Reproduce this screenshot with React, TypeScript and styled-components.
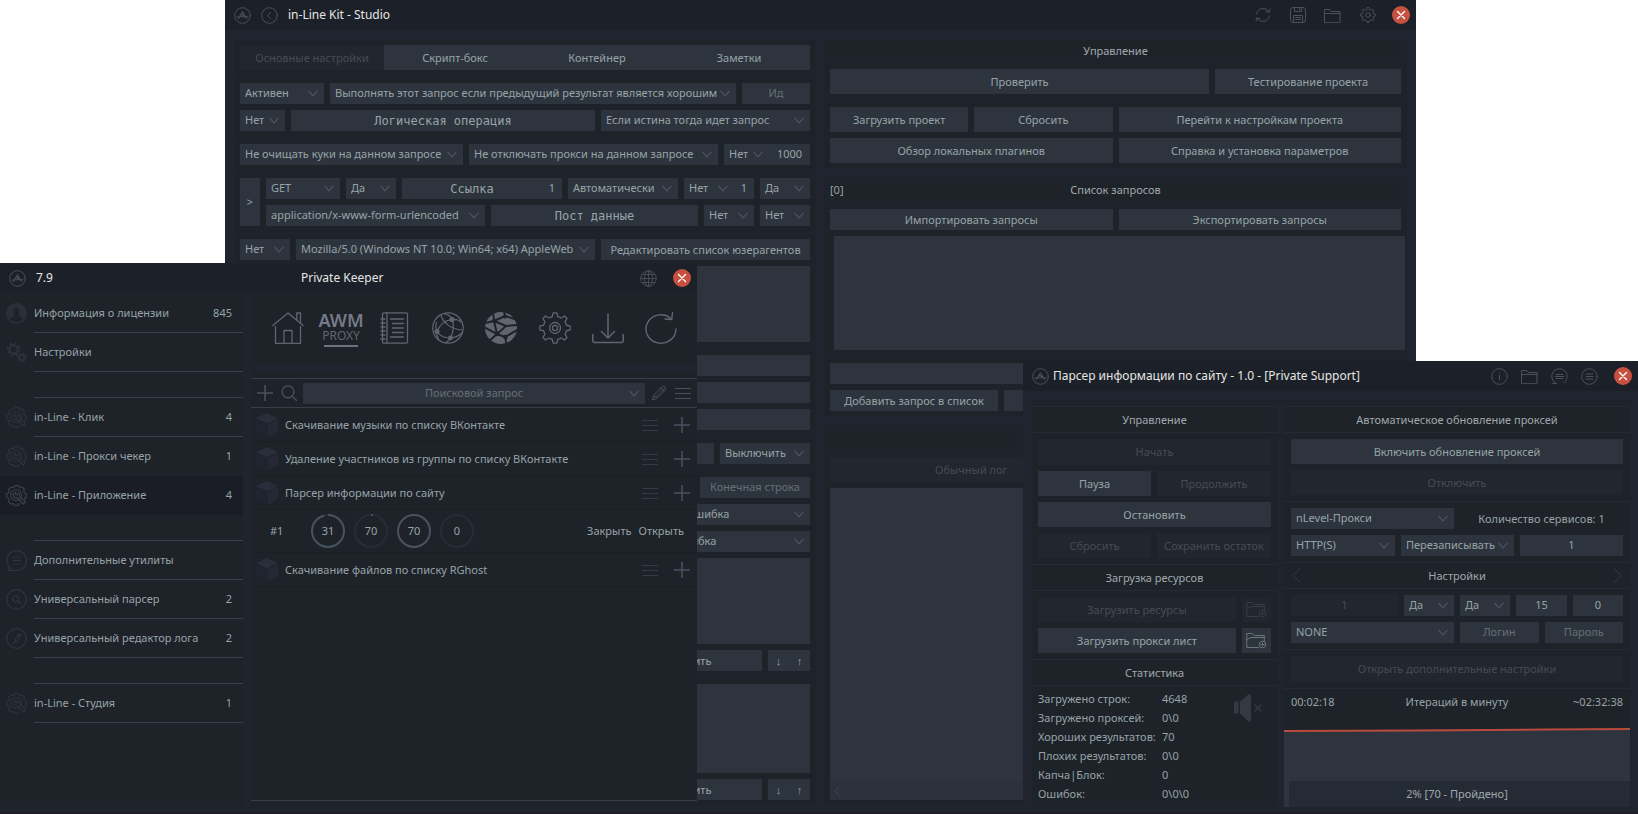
import React from "react";
import styled, { createGlobalStyle, css } from "styled-components";

const c = {
  title: "#1c2028",
  body: "#20242e",
  panel: "#1e2229",
  control: "#2e343d",
  disabled: "#22262f",
  text: "#96a4a8",
  heading: "#a0a9ac",
  dim: "#667075",
  off: "#444d53",
  line: "#3a3e47",
  soft: "#262a34",
  icon: "#4b505b",
  faint: "#2c313c",
  close: "#c75141",
};

const Global = createGlobalStyle`
  * { box-sizing: border-box; }
  body { margin: 0; background: #ffffff; }
  body, button, input, select, textarea {
    font-family: "Noto Sans", "Open Sans", sans-serif;
    font-size: 11px;
    line-height: 16px;
  }
`;

/* ---------- shared parts ---------- */

const Desktop = styled.main`
  position: relative;
  min-height: 100vh;
  overflow: hidden;
  color: ${c.text};
`;

const Window = styled.section`
  position: absolute;
  bottom: 0;
  display: flex;
  flex-direction: column;
  overflow: hidden;
  background: ${c.body};
  border-bottom: 2px solid #1d1c27;
`;

const StudioWindow = styled(Window)`
  top: 0;
  left: 225px;
  right: 222px;
`;

const KeeperWindow = styled(Window)`
  top: 263px;
  left: 0;
  width: 697px;
`;

const ParserWindow = styled(Window)`
  top: 361px;
  right: 0;
  width: 615px;
`;

const TitleBar = styled.header<{ $gap?: number }>`
  display: flex;
  align-items: center;
  flex: none;
  height: 30px;
  padding: 0 6px 0 9px;
  gap: ${(p) => p.$gap ?? 10}px;
  background: ${c.title};
  color: ${c.icon};
`;

const Title = styled.h1`
  margin: 0;
  font-size: 12px;
  line-height: 18px;
  font-weight: 400;
  color: #e6e6e6;
  white-space: nowrap;
`;

const Tools = styled.div`
  display: flex;
  align-items: center;
  gap: 16px;
  margin-left: auto;
`;

const ToolIcons = styled.div<{ $gap?: number }>`
  display: grid;
  grid-auto-flow: column;
  grid-auto-columns: 17px;
  gap: ${(p) => p.$gap ?? 0}px;
`;

const IconButton = styled.button<{ $tone?: string }>`
  display: grid;
  place-items: center;
  padding: 0;
  border: 0;
  background: none;
  color: ${(p) => p.$tone ?? c.icon};
  flex: none;
`;

const CloseButton = styled.button`
  display: grid;
  place-items: center;
  width: 18px;
  height: 18px;
  padding: 0;
  border: 0;
  border-radius: 50%;
  background: ${c.close};
  color: #ffffff;
`;

const Row = styled.div<{ $cols?: string; $gap?: number }>`
  display: grid;
  grid-template-columns: ${(p) => p.$cols ?? "1fr"};
  gap: ${(p) => p.$gap ?? 6}px;
`;

const Button = styled.button<{ $h?: number }>`
  min-width: 0;
  height: ${(p) => p.$h ?? 25}px;
  padding: 0;
  border: 0;
  background: ${c.control};
  color: ${c.text};
  white-space: nowrap;
  &:disabled {
    background: ${c.disabled};
    color: ${c.off};
  }
`;

const TallButton = styled(Button)`
  height: 100%;
`;

const Input = styled.input<{ $mono?: boolean }>`
  width: 100%;
  min-width: 0;
  height: 21px;
  padding: 0 0 2px;
  border: 0;
  border-radius: 0;
  background: ${c.control};
  color: ${c.text};
  text-align: center;
  ${(p) => p.$mono && css`
    font-family: "DejaVu Sans Mono", monospace;
    font-size: 12px;
    padding-bottom: 0;
  `}
  &::placeholder {
    color: ${(p) => (p.$mono ? c.text : c.dim)};
    opacity: 1;
  }
  &:disabled {
    background: ${c.disabled};
    color: ${c.off};
  }
`;

const TextArea = styled.textarea<{ $h?: number }>`
  display: block;
  width: 100%;
  height: ${(p) => (p.$h ? `${p.$h}px` : "auto")};
  flex: ${(p) => (p.$h ? "none" : "1")};
  min-height: 0;
  padding: 0;
  border: 0;
  resize: none;
  background: ${c.control};
  color: ${c.text};
`;

const SelectBox = styled.div`
  position: relative;
  min-width: 0;
  height: 21px;
  color: #4d545e;
`;

const SelectField = styled.select`
  appearance: none;
  display: block;
  width: 100%;
  height: 21px;
  padding: 0 0 2px 5px;
  border: 0;
  border-radius: 0;
  background: ${c.control};
  color: ${c.text};
`;

const Arrow = styled.svg`
  position: absolute;
  right: 6px;
  top: 7px;
  pointer-events: none;
`;

const Chevron = () => (
  <Arrow width="10" height="7" viewBox="0 0 10 7" fill="none" stroke="currentColor" strokeWidth="1.2">
    <path d="M.5.8 5 5.800 9.500.8" />
  </Arrow>
);

const Select = ({ value, label }: { value: string; label: string }) => (
  <SelectBox>
    <SelectField aria-label={label} defaultValue={value}>
      <option>{value}</option>
    </SelectField>
    <Chevron />
  </SelectBox>
);

/* ---------- icons ---------- */

const line = { fill: "none", stroke: "currentColor", strokeLinecap: "round", strokeLinejoin: "round" } as const;

function gearPath(cx: number, cy: number, teeth: number, outer: number, inner: number) {
  const step = (Math.PI * 2) / teeth;
  const pts: string[] = [];
  for (let i = 0; i < teeth; i++) {
    const a = i * step - Math.PI / 2;
    for (const [k, r] of [[-0.3, inner], [-0.15, outer], [0.15, outer], [0.3, inner]]) {
      pts.push(`${(cx + r * Math.cos(a + k * step)).toFixed(2)} ${(cy + r * Math.sin(a + k * step)).toFixed(2)}`);
    }
  }
  return `M${pts.join("L")}Z`;
}

const Logo = () => (
  <svg width="17" height="17" viewBox="0 0 17 17" {...line} color={c.icon}>
    <circle cx="8.500" cy="8.500" r="7.800" />
    <path d="M3 10h2.500l3-5.200L10 7.500M4.500 11.500l1-1.500M7 9.800h7M10 7.500l2.500 4M6 8l2-.5 2.500 1.500" strokeWidth="1.100" />
  </svg>
);

const BackIcon = () => (
  <svg width="17" height="17" viewBox="0 0 17 17" {...line}>
    <circle cx="8.500" cy="8.500" r="7.800" />
    <path d="M9.500 5.500 6.500 8.500l3 3" />
  </svg>
);

const CrossIcon = () => (
  <svg width="10" height="10" viewBox="0 0 10 10" {...line} strokeWidth="1.400">
    <path d="m1.500 1.500 7 7M8.500 1.500l-7 7" />
  </svg>
);

const SyncIcon = () => (
  <svg width="16" height="16" viewBox="0 0 16 16" {...line}>
    <path d="M1.500 7A6.800 6.800 0 0 1 14 4.800M14.500 9A6.800 6.800 0 0 1 2 11.200M15 1.800l-.8 3.400-3.200-.8M1 14.200l.8-3.400 3.200.8" />
  </svg>
);

const SaveIcon = () => (
  <svg width="16" height="16" viewBox="0 0 16 16" {...line}>
    <rect x=".5" y=".5" width="15" height="15" rx="2.500" />
    <path d="M4.500.5v4h7v-4M9.500 1.500v1.500M3.500 15V8.500h9V15M5.500 10.500h5M5.500 12.500h5" />
  </svg>
);

const FolderIcon = () => (
  <svg width="17" height="15" viewBox="0 0 17 15" {...line}>
    <path d="M.5 14.300V1.500h5l1.500 2h9v10.800zM.5 5.500h15.500" />
  </svg>
);

const CogIcon = () => (
  <svg width="16" height="16" viewBox="0 0 16 16" {...line}>
    <path d={gearPath(8, 8, 8, 7.5, 5.7)} />
    <circle cx="8" cy="8" r="2.300" />
  </svg>
);

const GlobeIcon = () => (
  <svg width="17" height="17" viewBox="0 0 17 17" {...line} strokeWidth=".9">
    <circle cx="8.500" cy="8.500" r="7.800" />
    <ellipse cx="8.500" cy="8.500" rx="4" ry="7.800" />
    <path d="M8.500.7v15.600M.7 8.500h15.600M2 4.500h13M2 12.500h13" />
  </svg>
);

const InfoIcon = () => (
  <svg width="17" height="17" viewBox="0 0 17 17" {...line}>
    <circle cx="8.500" cy="8.500" r="7.800" />
    <path d="M8.500 7.500v4M8.500 5v.3" strokeWidth="1.200" />
  </svg>
);

const ChatIcon = () => (
  <svg width="17" height="17" viewBox="0 0 17 17" {...line}>
    <path d="M5.500 15.700a7.800 7.800 0 1 1 7.300-.7M1.500 15.500h4" />
    <path d="M5 6.500h7M4 8.500h9M5 10.500h7" />
  </svg>
);

const CircleMenuIcon = () => (
  <svg width="17" height="17" viewBox="0 0 17 17" {...line}>
    <circle cx="8.500" cy="8.500" r="7.800" />
    <path d="M5 6h7M5 8.500h7M5 11h7" />
  </svg>
);

const big = { width: 32, height: 32, viewBox: "0 0 32 32", ...line, strokeWidth: 1.3 };

const HomeIcon = () => (
  <svg {...big}>
    <path d="M.8 13.500 16 1l15.200 12.500M24.800 7.500V1h3.700v9.500M3.500 14.500v16.800H12V18.500h8v12.800h8.500V14.500M12 31.300h8" />
  </svg>
);

const NotebookIcon = () => (
  <svg {...big}>
    <rect x="4.500" y=".8" width="25" height="30.400" rx="1.500" />
    <path d="M9 1v30M12.500 7h13M14.500 11.500h11M14.500 16h11M14.500 20.500h11M12.500 25h13" />
    <path d="M3 7h4M3 11h4M3 15h4M3 19h4M3 23h4M3 27h4" />
  </svg>
);

const NetworkIcon = () => (
  <svg {...big} strokeWidth="1.200">
    <circle cx="16" cy="16" r="15.200" />
    <path d="M5 19.500C8 12 13 8.500 20 7.500M20 7.500c-1-3-4-5-8-5.800M20 7.500c4-.5 7 .5 8.500 2.500M20 7.500c2.500 6 1.500 12-1.500 18.500M5 19.500c3 4.500 8 6.500 13.500 6.500M18.500 26c5-.5 9-2.500 11.500-5M5 19.500c-1.500-3-1.500-6-.5-9M5 19.500c-.5 3 0 5 1.500 7M18.500 26c-1 2-2.500 3.500-5 4.800M9 3c2 8 10 14 21 15" />
    <g fill="currentColor"><circle cx="5" cy="19.500" r="2" /><circle cx="20" cy="7.500" r="2" /><circle cx="18.500" cy="26" r="1.800" /></g>
  </svg>
);

const BallIcon = () => (
  <svg {...big} stroke="none">
    <circle cx="16" cy="16" r="16" fill="currentColor" />
    <g fill="none" stroke={c.panel} strokeWidth="2">
      <path d="M0 11 9 9 20 4 19-1M9 9 8-1M9 9l3 13-9 8M12 22-1 15M12 22l9-8 12-1M20 4l13 4M21 14 9 9M12 22l8 3 2 9M20 25l12-7" />
    </g>
    <g fill={c.panel}><circle cx="9" cy="9" r="2" /><circle cx="12" cy="22" r="2.300" /><circle cx="20" cy="4.500" r="2" /><circle cx="20.500" cy="25" r="2.300" /></g>
  </svg>
);

const BigGearIcon = () => (
  <svg {...big}>
    <path d={gearPath(16, 16, 8, 15.3, 11.8)} />
    <circle cx="16" cy="16" r="5.500" />
    <circle cx="16" cy="16" r="2.600" />
  </svg>
);

const DownloadIcon = () => (
  <svg {...big} strokeWidth="1.500">
    <path d="M16 2v24M9.500 19.500 16 26l6.500-6.500M.8 22.500v6a2 2 0 0 0 2 2h26.400a2 2 0 0 0 2-2v-6" />
  </svg>
);

const ReloadIcon = () => (
  <svg {...big} strokeWidth="1.400">
    <path d="M31 17A15 14.200 0 1 1 25.500 6M27.500.8 26.800 7.500 20 7" />
  </svg>
);

const PlusIcon = () => (
  <svg width="16" height="16" viewBox="0 0 16 16" fill="none" stroke="currentColor" strokeWidth="1.600">
    <path d="M8 0v16M0 8h16" />
  </svg>
);

const MenuIcon = () => (
  <svg width="16" height="16" viewBox="0 0 16 16" fill="none" stroke="currentColor">
    <path d="M0 3.500h16M0 8.500h16M0 13.500h16" />
  </svg>
);

const SearchIcon = () => (
  <svg width="16" height="16" viewBox="0 0 16 16" {...line} strokeWidth="1.400">
    <circle cx="7" cy="6.800" r="5.900" />
    <path d="m11.500 11.500 4 4" />
  </svg>
);

const PencilIcon = () => (
  <svg width="16" height="16" viewBox="0 0 16 16" {...line}>
    <path d="M1.500 14.500 2.800 10 11 1.800q1.500-1.200 3 .2t.2 3L6 13.200zM3 10.500l2.500 2.500M4.500 12 12 4.500M10 3l3 3" />
  </svg>
);

const CubeIcon = () => (
  <svg width="22" height="24" viewBox="0 0 22 24">
    <path d="M11 0 22 5 11 10.500 0 5z" fill="#292e3b" />
    <path d="M0 6 10.500 11.500V24L0 18z" fill="#20242e" />
    <path d="M11.500 11.500 22 6v12l-10.500 6z" fill="#242935" />
  </svg>
);

const UserIcon = () => (
  <svg width="21" height="21" viewBox="0 0 21 21">
    <circle cx="10.500" cy="10.500" r="10.500" fill="#2a303a" />
    <path d="M10.500 4.500a3.500 3.800 0 0 1 2 6.500v1.500c0 1 3.500 1.300 4.500 3.500q-2.500 3-6.500 3T4 16c1-2.200 4.500-2.500 4.500-3.500V11a3.500 3.800 0 0 1 2-6.500" fill="#1e2229" />
  </svg>
);

const GearsIcon = () => (
  <svg width="21" height="21" viewBox="0 0 21 21" fill="none" stroke="#2c323b">
    <g strokeWidth="2.400"><circle cx="7.500" cy="7.500" r="4.200" /><circle cx="15.800" cy="15.500" r="2.700" strokeWidth="2" /></g>
    <circle cx="7.500" cy="7.500" r="6.200" strokeWidth="2" strokeDasharray="2.400 2.470" />
    <circle cx="15.800" cy="15.500" r="4.200" strokeWidth="1.800" strokeDasharray="1.700 1.600" />
  </svg>
);

const WrenchGearIcon = ({ bright }: { bright?: boolean }) => (
  <svg width="21" height="21" viewBox="0 0 21 21" {...line} strokeWidth="1.200" color={bright ? "#3a414c" : "#2d333d"}>
    <path d="M19 14.500 18.700 13.200 20.300 12.300V8.700L18.500 8l-.9-2 .8-1.700L16 2l-2 .8L12.800.7H8.700L7.800 2.800 5.500 2 2.500 4.300 3.200 6 2.500 8 .7 8.700v3.600L2.500 13l.8 2-.8 1.700L5 19.200l2-.8 1.500 1.900h3.800l.7-1.800" />
    <circle cx="10" cy="10" r="5.500" />
    <path d="M10 7a3 3 0 0 0-2.800 3.500 3 3 0 0 0 4 2L17 19l2.500-2.200-6-6A3 3 0 0 0 12.500 8L11 10l-1.500-.5z" />
  </svg>
);

const UtilIcon = ({ kind }: { kind: "chat" | "search" | "edit" }) => (
  <svg width="21" height="21" viewBox="0 0 21 21" {...line} strokeWidth="1.200" color="#2f353f">
    {kind === "chat" ? <path d="M5.500 18.800A9.800 9.800 0 1 1 10.500 20.300H2l1.700-3" /> : <circle cx="10.500" cy="10.500" r="9.800" />}
    {kind === "chat" && <path d="M7 7h7.500M7 10.500h7.500M7 14h7.500" />}
    {kind === "search" && <path d="M12.800 9.800a3 3 0 1 1-6 0 3 3 0 0 1 6 0M12.200 12l2.500 2.500" />}
    {kind === "edit" && <path d="m9 14.500.5-3L13 6l2.200 1.200-3.500 5.500zM6 15.500l3-1M12.500 6.800l2 1.300" />}
  </svg>
);

const FolderAddIcon = () => (
  <svg width="21" height="17" viewBox="0 0 21 17" {...line}>
    <path d="M12.500 15.500H.8V1.500h5.500l2 2h10v6M.8 7.500 5 5.500h13.300" />
    <circle cx="16.500" cy="12.500" r="3.300" />
    <path d="M15 12.500h3M16.500 11v3" />
  </svg>
);

const MuteIcon = () => (
  <svg width="28" height="28" viewBox="0 0 28 28" color="#333a43">
    <path d="M0 8.500q0-1 1-1h3.500v12H1q-1 0-1-1zM6 7.500 14.500.3Q17 0 17 1.500v25q0 1.500-2.500 1L6 19.500z" fill="currentColor" />
    <path d="m20.500 10.500 7 7M27.500 10.500l-7 7" stroke="currentColor" strokeWidth="1.400" />
  </svg>
);

/* ---------- studio ---------- */

const StudioBody = styled.div`
  display: grid;
  grid-template-columns: minmax(0, 582fr) minmax(0, 583fr);
  gap: 8px;
  flex: 1;
  min-height: 0;
  padding: 9px 9px 6px;
`;

const Column = styled.div`
  display: flex;
  flex-direction: column;
  gap: 8px;
  min-width: 0;
`;

const Panel = styled.div<{ $fill?: boolean }>`
  display: flex;
  flex-direction: column;
  gap: 1px;
  flex: ${(p) => (p.$fill ? "1" : "none")};
`;

const Group = styled.div<{ $fill?: boolean }>`
  display: flex;
  flex-direction: column;
  gap: 6px;
  flex: ${(p) => (p.$fill ? "1" : "none")};
  padding: 6px;
  background: ${c.panel};
`;

const PanelHead = styled.div<{ $h?: number }>`
  display: grid;
  grid-template-columns: 1fr auto 1fr;
  align-items: center;
  height: ${(p) => p.$h ?? 25}px;
  padding: 0 6px;
  background: ${c.panel};
`;

const HeadText = styled.h2`
  grid-column: 2;
  margin: 0;
  font-size: 11px;
  line-height: 16px;
  font-weight: 400;
  color: ${c.heading};
`;

const Tabs = styled.div`
  display: grid;
  grid-template-columns: 144px 1fr 1fr 1fr;
`;

const RequestGrid = styled.div`
  display: grid;
  grid-template-columns: 20px 1fr;
  gap: 6px;
`;

const Lines = styled.div`
  display: flex;
  flex-direction: column;
  gap: 6px;
  min-width: 0;
`;

const EndRow = styled.div<{ $cols: string }>`
  display: grid;
  grid-template-columns: ${(p) => p.$cols};
  column-gap: 6px;
  justify-content: end;
`;

const QueryList = styled.div`
  display: flex;
  margin: 0 -4px 0 4px;
`;

const LogBox = styled.div`
  display: flex;
  align-items: flex-end;
  flex: 1;
  background: ${c.control};
`;

const LogScroll = styled.div`
  display: flex;
  align-items: center;
  flex: 1;
  height: 18px;
  padding-left: 4px;
  background: #2c323b;
  color: #3e4752;
`;

const Studio = () => (
  <StudioWindow aria-label="Studio">
    <TitleBar>
      <Logo />
      <IconButton aria-label="Назад"><BackIcon /></IconButton>
      <Title>in-Line Kit - Studio</Title>
      <Tools>
        <ToolIcons $gap={18}>
          <IconButton aria-label="Обновить"><SyncIcon /></IconButton>
          <IconButton aria-label="Сохранить"><SaveIcon /></IconButton>
          <IconButton aria-label="Открыть"><FolderIcon /></IconButton>
          <IconButton aria-label="Параметры"><CogIcon /></IconButton>
        </ToolIcons>
        <CloseButton aria-label="Закрыть"><CrossIcon /></CloseButton>
      </Tools>
    </TitleBar>
    <StudioBody>
      <Panel $fill>
        <Group>
          <Tabs>
            <Button disabled>Основные настройки</Button>
            <Button>Скрипт-бокс</Button>
            <Button>Контейнер</Button>
            <Button>Заметки</Button>
          </Tabs>
        </Group>
        <Group>
          <Row $cols="84px 1fr 68px">
            <Select label="Состояние" value="Активен" />
            <Select label="Условие" value="Выполнять этот запрос если предыдущий результат является хорошим" />
            <Input aria-label="Ид" placeholder="Ид" />
          </Row>
          <Row $cols="45px 1fr 209px">
            <Select label="Отрицание" value="Нет" />
            <Input $mono aria-label="Логическая операция" placeholder="Логическая операция" />
            <Select label="Переход" value="Если истина тогда идет запрос" />
          </Row>
        </Group>
        <Group>
          <Row $cols="223px 1fr 86px">
            <Select label="Куки" value="Не очищать куки на данном запросе" />
            <Select label="Прокси" value="Не отключать прокси на данном запросе" />
            <Row $cols="45px 1fr" $gap={0}>
              <Select label="Пауза" value="Нет" />
              <Input aria-label="Длительность" defaultValue="1000" />
            </Row>
          </Row>
        </Group>
        <Group>
          <RequestGrid>
            <TallButton>&gt;</TallButton>
            <Lines>
              <Row $cols="74px 50px 1fr 110px 70px 50px">
                <Select label="Метод" value="GET" />
                <Select label="Редирект" value="Да" />
                <Row $cols="1fr 20px" $gap={0}>
                  <Input $mono aria-label="Ссылка" placeholder="Ссылка" />
                  <Input aria-label="Номер ссылки" defaultValue="1" />
                </Row>
                <Select label="Кодировка" value="Автоматически" />
                <Row $cols="50px 1fr" $gap={0}>
                  <Select label="Повтор" value="Нет" />
                  <Input aria-label="Число повторов" defaultValue="1" />
                </Row>
                <Select label="Заголовки" value="Да" />
              </Row>
              <Row $cols="219px 1fr 50px 50px">
                <Select label="Тип данных" value="application/x-www-form-urlencoded" />
                <Input $mono aria-label="Пост данные" placeholder="Пост данные" />
                <Select label="Кодировать" value="Нет" />
                <Select label="Файл" value="Нет" />
              </Row>
            </Lines>
          </RequestGrid>
        </Group>
        <Group>
          <Row $cols="50px 1fr 209px">
            <Select label="Юзерагент" value="Нет" />
            <Select label="Список юзерагентов" value="Mozilla/5.0 (Windows NT 10.0; Win64; x64) AppleWeb" />
            <Button $h={21}>Редактировать список юзерагентов</Button>
          </Row>
          <TextArea $h={76} aria-label="Заголовки запроса" />
        </Group>
        <Group>
          <Input aria-label="Поле 1" />
          <Input aria-label="Поле 2" />
          <Input aria-label="Поле 3" />
        </Group>
        <Group>
          <Row $cols="1fr 90px">
            <Input aria-label="Значение" />
            <Select label="Режим" value="Выключить" />
          </Row>
        </Group>
        <Group>
          <EndRow $cols="110px">
            <Input aria-label="Конечная строка" placeholder="Конечная строка" />
          </EndRow>
          <EndRow $cols="129px">
            <Select label="Результат" value="Ошибка" />
          </EndRow>
          <EndRow $cols="142px">
            <Select label="Иначе" value="Ошибка" />
          </EndRow>
          <TextArea $h={86} aria-label="Список строк" />
          <EndRow $cols="144px 42px">
            <Button $h={21}>Удалить</Button>
            <Row $cols="1fr 1fr" $gap={0}>
              <Button $h={21}>↓</Button>
              <Button $h={21}>↑</Button>
            </Row>
          </EndRow>
        </Group>
        <Group $fill>
          <TextArea aria-label="Список замен" />
          <EndRow $cols="144px 42px">
            <Button $h={21}>Удалить</Button>
            <Row $cols="1fr 1fr" $gap={0}>
              <Button $h={21}>↓</Button>
              <Button $h={21}>↑</Button>
            </Row>
          </EndRow>
        </Group>
      </Panel>
      <Column>
        <Panel>
          <PanelHead $h={23}><HeadText>Управление</HeadText></PanelHead>
          <Group>
            <Row $cols="1fr 186px">
              <Button>Проверить</Button>
              <Button>Тестирование проекта</Button>
            </Row>
          </Group>
          <Group>
            <Row $cols="1fr 1fr">
              <Row $cols="1fr 1fr">
                <Button>Загрузить проект</Button>
                <Button>Сбросить</Button>
              </Row>
              <Button>Перейти к настройкам проекта</Button>
              <Button>Обзор локальных плагинов</Button>
              <Button>Справка и установка параметров</Button>
            </Row>
          </Group>
        </Panel>
        <Panel>
          <PanelHead><span>[0]</span><HeadText>Список запросов</HeadText></PanelHead>
          <Group>
            <Row $cols="1fr 1fr">
              <Button $h={21}>Импортировать запросы</Button>
              <Button $h={21}>Экспортировать запросы</Button>
            </Row>
            <QueryList><TextArea $h={114} aria-label="Список запросов" /></QueryList>
          </Group>
          <Group>
            <Input aria-label="Имя запроса" />
            <Row $cols="168px 1fr">
              <Button $h={21}>Добавить запрос в список</Button>
              <Button $h={21} aria-label="Удалить запрос" />
            </Row>
          </Group>
        </Panel>
        <Panel $fill>
          <PanelHead />
          <Group $fill>
            <Row $cols="1fr 1fr">
              <Button disabled>Обычный лог</Button>
              <Button aria-label="Подробный лог" />
            </Row>
            <LogBox>
              <LogScroll>
                <svg width="6" height="10" viewBox="0 0 6 10" {...line}><path d="M5 1 1 5l4 4" /></svg>
              </LogScroll>
            </LogBox>
          </Group>
        </Panel>
      </Column>
    </StudioBody>
  </StudioWindow>
);

/* ---------- keeper ---------- */

const KeeperTitle = styled(Title)`
  margin-left: 238px;
`;

const KeeperBody = styled.div`
  display: grid;
  grid-template-columns: 243px 1fr;
  gap: 8px;
  flex: 1;
  min-height: 0;
  padding-bottom: 5px;
`;

const SideNav = styled.nav`
  padding-top: 1px;
  background: ${c.panel};
`;

const SideItem = styled.a<{ $plain?: boolean; $active?: boolean }>`
  display: grid;
  grid-template-columns: 34px 1fr;
  align-items: center;
  height: 39px;
  color: ${c.text};
  text-decoration: none;
  background: ${(p) => (p.$active ? "#1a1d25" : "transparent")};
  > svg { margin-left: 6px; }
  > span {
    display: flex;
    justify-content: space-between;
    align-items: center;
    height: 39px;
    padding-right: 11px;
    border-bottom: 1px solid ${(p) => (p.$plain ? "transparent" : c.line)};
  }
`;

const SideGap = styled.div<{ $h?: number }>`
  height: ${(p) => p.$h ?? 26}px;
  margin-left: 34px;
  border-bottom: 1px solid ${c.line};
`;

const KeeperMain = styled.div`
  display: flex;
  flex-direction: column;
  gap: 8px;
  min-width: 0;
`;

const IconStrip = styled.div`
  display: grid;
  grid-template-columns: repeat(8, 1fr);
  place-items: center;
  height: 70px;
  padding: 0 9px 0 10px;
  background: ${c.panel};
`;

const ProxyLogo = styled.button`
  display: flex;
  flex-direction: column;
  align-items: center;
  width: 34px;
  padding: 0 0 2px;
  border: 0;
  border-bottom: 2px solid #70737f;
  background: none;
  color: #62656f;
  font-size: 12px;
  line-height: 14px;
  margin-top: 1px;
`;

const ProxyName = styled.strong`
  font-size: 18px;
  line-height: 18px;
  font-weight: 600;
  color: #777a88;
`;

const ListPanel = styled.div`
  display: flex;
  flex-direction: column;
  flex: 1;
  padding: 7px 0 6px;
  background: ${c.panel};
`;

const ListFrame = styled.div`
  flex: 1;
  border-bottom: 1px solid ${c.line};
`;

const SearchBar = styled.div`
  display: grid;
  grid-template-columns: 16px 16px 1fr 16px 16px;
  column-gap: 8px;
  align-items: center;
  height: 30px;
  padding: 0 6px;
  border-top: 1px solid ${c.line};
  border-bottom: 1px solid ${c.line};
`;

const SearchField = styled.div`
  position: relative;
  height: 21px;
  margin: 0 -2px;
  color: #4d545e;
`;

const TaskRow = styled.div`
  display: grid;
  grid-template-columns: 22px 1fr 16px 16px;
  align-items: center;
  height: 34px;
  padding: 0 7px 0 5px;
  column-gap: 16px;
  border-bottom: 1px solid #1a1e25;
  color: ${c.text};
  > span { margin-left: -9px; }
`;

const RunRow = styled.div`
  display: flex;
  align-items: center;
  height: 43px;
  border-bottom: 1px solid #1a1e25;
`;

const RunNumber = styled.span`
  width: 51px;
  padding-left: 19px;
  margin-right: 9px;
  border-right: 1px solid #1b1f26;
  line-height: 34px;
`;

const Rings = styled.div`
  display: flex;
  gap: 9px;
  flex: 1;
`;

const RingBox = styled.span`
  display: grid;
  place-items: center;
  > * { grid-area: 1 / 1; }
`;

const TextButton = styled.button`
  padding: 0;
  margin-right: 7px;
  border: 0;
  background: none;
  color: ${c.text};
`;

const RunActions = styled.div`
  padding-right: 6px;
`;

const Ring = ({ value, part }: { value: number; part: number }) => (
  <RingBox>
    <svg width="34" height="34" viewBox="0 0 34 34" fill="none" strokeWidth="2">
      <circle cx="17" cy="17" r="16" stroke="#272d38" />
      <circle
        cx="17" cy="17" r="16" stroke="#47535f" pathLength="100"
        strokeDasharray={`${part} 100`} transform="rotate(-90 17 17)"
      />
    </svg>
    <span>{value}</span>
  </RingBox>
);

const Task = ({ name }: { name: string }) => (
  <TaskRow>
    <CubeIcon />
    <span>{name}</span>
    <IconButton $tone="#343a46" aria-label="Меню"><MenuIcon /></IconButton>
    <IconButton $tone="#475161" aria-label="Добавить"><PlusIcon /></IconButton>
  </TaskRow>
);

const Side = ({ icon, name, count, plain, active }: {
  icon: React.ReactNode; name: string; count?: string; plain?: boolean; active?: boolean;
}) => (
  <SideItem href="#" $plain={plain} $active={active}>
    {icon}
    <span><span>{name}</span>{count && <span>{count}</span>}</span>
  </SideItem>
);

const Keeper = () => (
  <KeeperWindow aria-label="Private Keeper">
    <TitleBar>
      <Logo />
      <Title as="span">7.9</Title>
      <KeeperTitle>Private Keeper</KeeperTitle>
      <Tools>
        <ToolIcons>
          <IconButton aria-label="Сайт"><GlobeIcon /></IconButton>
        </ToolIcons>
        <CloseButton aria-label="Закрыть"><CrossIcon /></CloseButton>
      </Tools>
    </TitleBar>
    <KeeperBody>
      <SideNav>
        <Side icon={<UserIcon />} name="Информация о лицензии" count="845" />
        <Side icon={<GearsIcon />} name="Настройки" />
        <SideGap />
        <Side icon={<WrenchGearIcon />} name="in-Line - Клик" count="4" />
        <Side icon={<WrenchGearIcon />} name="in-Line - Прокси чекер" count="1" plain />
        <Side icon={<WrenchGearIcon bright />} name="in-Line - Приложение" count="4" plain active />
        <SideGap />
        <Side icon={<UtilIcon kind="chat" />} name="Дополнительные утилиты" />
        <Side icon={<UtilIcon kind="search" />} name="Универсальный парсер" count="2" />
        <Side icon={<UtilIcon kind="edit" />} name="Универсальный редактор лога" count="2" />
        <SideGap />
        <Side icon={<WrenchGearIcon />} name="in-Line - Студия" count="1" />
      </SideNav>
      <KeeperMain>
        <IconStrip>
          <IconButton $tone="#62656f" aria-label="Домой"><HomeIcon /></IconButton>
          <ProxyLogo><ProxyName>AWM</ProxyName>PROXY</ProxyLogo>
          <IconButton $tone="#62656f" aria-label="Журнал"><NotebookIcon /></IconButton>
          <IconButton $tone="#62656f" aria-label="Сеть"><NetworkIcon /></IconButton>
          <IconButton $tone="#62656f" aria-label="Прокси"><BallIcon /></IconButton>
          <IconButton $tone="#62656f" aria-label="Параметры"><BigGearIcon /></IconButton>
          <IconButton $tone="#62656f" aria-label="Скачать"><DownloadIcon /></IconButton>
          <IconButton $tone="#62656f" aria-label="Обновить"><ReloadIcon /></IconButton>
        </IconStrip>
        <ListPanel>
          <ListFrame>
            <SearchBar>
              <IconButton aria-label="Добавить"><PlusIcon /></IconButton>
              <IconButton aria-label="Найти"><SearchIcon /></IconButton>
              <SearchField>
                <Input aria-label="Поисковой запрос" placeholder="Поисковой запрос" />
                <Chevron />
              </SearchField>
              <IconButton aria-label="Изменить"><PencilIcon /></IconButton>
              <IconButton aria-label="Меню"><MenuIcon /></IconButton>
            </SearchBar>
            <Task name="Скачивание музыки по списку ВКонтакте" />
            <Task name="Удаление участников из группы по списку ВКонтакте" />
            <Task name="Парсер информации по сайту" />
            <RunRow>
              <RunNumber>#1</RunNumber>
              <Rings>
                <Ring value={31} part={96} />
                <Ring value={70} part={2} />
                <Ring value={70} part={100} />
                <Ring value={0} part={0} />
              </Rings>
              <RunActions>
                <TextButton>Закрыть</TextButton>
                <TextButton>Открыть</TextButton>
              </RunActions>
            </RunRow>
            <Task name="Скачивание файлов по списку RGhost" />
          </ListFrame>
        </ListPanel>
      </KeeperMain>
    </KeeperBody>
  </KeeperWindow>
);

/* ---------- parser ---------- */

const ParserBody = styled.div`
  display: grid;
  grid-template-columns: 247px 1fr;
  gap: 6px;
  flex: 1;
  min-height: 0;
  padding: 8px 8px 5px;
`;

const ParserPanel = styled.div`
  display: flex;
  flex-direction: column;
  min-width: 0;
  padding-top: 7px;
  background: ${c.panel};
`;

const SectionHead = styled.h2`
  display: flex;
  align-items: center;
  justify-content: center;
  margin: 0;
  height: 27px;
  padding: 0 8px;
  border-top: 1px solid ${c.soft};
  border-bottom: 1px solid ${c.soft};
  font-size: 11px;
  line-height: 16px;
  font-weight: 400;
  color: ${c.heading};
  > span { flex: 1; text-align: center; }
`;

const Block = styled.div<{ $ruled?: boolean }>`
  display: flex;
  flex-direction: column;
  gap: 6px;
  padding: 6px 7px;
  border-bottom: ${(p) => (p.$ruled ? `1px solid ${c.soft}` : "0")};
`;

const FolderButton = styled(Button)`
  display: grid;
  place-items: center;
  color: #6a7479;
  &:disabled { color: #363d45; }
`;

const Stats = styled.div`
  display: flex;
  justify-content: space-between;
  align-items: flex-start;
  padding: 3px 16px 0 7px;
`;

const StatTable = styled.table`
  border-collapse: collapse;
  th, td {
    height: 19px;
    padding: 0;
    font-weight: 400;
    text-align: left;
    white-space: nowrap;
  }
  th { width: 124px; }
`;

const MuteButton = styled(IconButton)`
  margin-top: 5px;
`;

const CenterText = styled.span`
  align-self: center;
  text-align: center;
`;

const TimeRow = styled.div`
  display: grid;
  grid-template-columns: 1fr auto 1fr;
  align-items: center;
  height: 26px;
  padding: 0 7px;
  > :last-child { text-align: right; }
`;

const Chart = styled.div`
  position: relative;
  flex: 1;
  min-height: 60px;
  > svg { display: block; width: 100%; height: 100%; }
`;

const ProgressLabel = styled.div`
  position: absolute;
  left: 5px;
  right: 0;
  bottom: 0;
  height: 26px;
  padding-right: 5px;
  line-height: 25px;
  text-align: center;
  background: #252b34;
  color: ${c.heading};
`;

const stats = [
  ["Загружено строк:", "4648"],
  ["Загружено проксей:", "0\\0"],
  ["Хороших результатов:", "70"],
  ["Плохих результатов:", "0\\0"],
  ["Капча|Блок:", "0"],
  ["Ошибок:", "0\\0\\0"],
];

const Parser = () => (
  <ParserWindow aria-label="Парсер">
    <TitleBar $gap={4}>
      <Logo />
      <Title>Парсер информации по сайту - 1.0 - [Private Support]</Title>
      <Tools>
        <ToolIcons $gap={13}>
          <IconButton aria-label="Информация"><InfoIcon /></IconButton>
          <IconButton aria-label="Папка"><FolderIcon /></IconButton>
          <IconButton aria-label="Сообщения"><ChatIcon /></IconButton>
          <IconButton aria-label="Меню"><CircleMenuIcon /></IconButton>
        </ToolIcons>
        <CloseButton aria-label="Закрыть"><CrossIcon /></CloseButton>
      </Tools>
    </TitleBar>
    <ParserBody>
      <ParserPanel>
        <SectionHead>Управление</SectionHead>
        <Block>
          <Button $h={26} disabled>Начать</Button>
          <Row $cols="113px 1fr">
            <Button>Пауза</Button>
            <Button disabled>Продолжить</Button>
          </Row>
          <Button>Остановить</Button>
          <Row $cols="113px 1fr">
            <Button disabled>Сбросить</Button>
            <Button disabled>Сохранить остаток</Button>
          </Row>
        </Block>
        <SectionHead>Загрузка ресурсов</SectionHead>
        <Block>
          <Row $cols="1fr 29px">
            <Button disabled>Загрузить ресурсы</Button>
            <FolderButton disabled aria-label="Папка ресурсов"><FolderAddIcon /></FolderButton>
            <Button>Загрузить прокси лист</Button>
            <FolderButton aria-label="Папка прокси"><FolderAddIcon /></FolderButton>
          </Row>
        </Block>
        <SectionHead>Статистика</SectionHead>
        <Stats>
          <StatTable>
            <tbody>
              {stats.map(([name, value]) => (
                <tr key={name}><th scope="row">{name}</th><td>{value}</td></tr>
              ))}
            </tbody>
          </StatTable>
          <MuteButton aria-label="Звук выключен"><MuteIcon /></MuteButton>
        </Stats>
      </ParserPanel>
      <ParserPanel>
        <SectionHead>Автоматическое обновление проксей</SectionHead>
        <Block $ruled>
          <Button>Включить обновление проксей</Button>
          <Button disabled>Отключить</Button>
        </Block>
        <Block>
          <Row $cols="163px 1fr">
            <Select label="Источник прокси" value="nLevel-Прокси" />
            <CenterText>Количество сервисов: 1</CenterText>
          </Row>
          <Row $cols="104px 113px 1fr">
            <Select label="Протокол" value="HTTP(S)" />
            <Select label="Запись" value="Перезаписывать" />
            <Input aria-label="Интервал" defaultValue="1" />
          </Row>
        </Block>
        <SectionHead>
          <IconButton $tone="#363e48" aria-label="Предыдущие"><svg width="9" height="15" viewBox="0 0 9 15" {...line}><path d="M8 .5.8 7.500 8 14.500" /></svg></IconButton>
          <span>Настройки</span>
          <IconButton $tone="#363e48" aria-label="Следующие"><svg width="9" height="15" viewBox="0 0 9 15" {...line}><path d="m1 .5 7.200 7L1 14.500" /></svg></IconButton>
        </SectionHead>
        <Block $ruled>
          <Row $cols="1fr 50px 50px 51px 50px">
            <Input disabled aria-label="Потоки" defaultValue="1" />
            <Select label="Использовать прокси" value="Да" />
            <Select label="Менять прокси" value="Да" />
            <Input aria-label="Таймаут" defaultValue="15" />
            <Input aria-label="Задержка" defaultValue="0" />
          </Row>
          <Row $cols="163px 1fr 1fr">
            <Select label="Авторизация" value="NONE" />
            <Input aria-label="Логин" placeholder="Логин" />
            <Input aria-label="Пароль" placeholder="Пароль" />
          </Row>
        </Block>
        <Block $ruled>
          <Button $h={26} disabled>Открыть дополнительные настройки</Button>
        </Block>
        <TimeRow>
          <span>00:02:18</span>
          <span>Итераций в минуту</span>
          <span>~02:32:38</span>
        </TimeRow>
        <Chart>
          <svg viewBox="0 0 346 92" preserveAspectRatio="none">
            <path d="M0 16 130 15.500 260 14.500 346 14V92H0z" fill={c.control} />
            <path d="M0 16 130 15.500 260 14.500 346 14" fill="none" stroke="#b94b3d" strokeWidth="2" />
          </svg>
          <ProgressLabel>2% [70 - Пройдено]</ProgressLabel>
        </Chart>
      </ParserPanel>
    </ParserBody>
  </ParserWindow>
);

export default function App() {
  return (
    <Desktop>
      <Global />
      <Studio />
      <Keeper />
      <Parser />
    </Desktop>
  );
}
